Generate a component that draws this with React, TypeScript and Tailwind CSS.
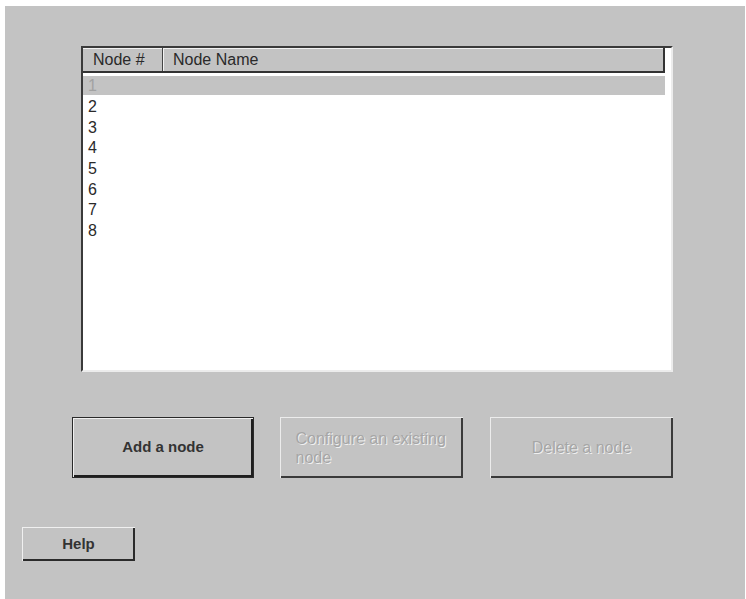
import React from "react";

const rows = [1, 2, 3, 4, 5, 6, 7, 8];

export default function App() {
    const font = "font-['Liberation_Sans',Arial,sans-serif]";

    return (
        <div className={`w-[746px] h-[599px] bg-white pt-[6px] pl-[5px] pr-[1px] ${font}`}>
            <div className="h-[593px] bg-[#c3c3c3] flex flex-col">
                {/* list box */}
                <div className="mt-[40px] ml-[76px] w-[592px] h-[326px] bg-white border-l-2 border-t-2 border-l-[#3a3a3a] border-t-[#3a3a3a] border-r-2 border-b-2 border-r-[#ececec] border-b-[#ececec]">
                    <div className="w-[582px] h-[25px] flex bg-[#c3c3c3] border-b-2 border-r-2 border-[#333] shadow-[inset_0_1px_0_#f2f2f2] text-[16px] text-[#2a2a2a]">
                        <div className="w-[80px] h-full flex items-center pl-[10px] border-r border-[#444] shadow-[1px_0_0_#f2f2f2]">
                            Node #
                        </div>
                        <div className="flex-1 h-full flex items-center pl-[10px]">Node Name</div>
                    </div>
                    <div className="flex flex-col mt-[3px]">
                        {rows.map((n) => (
                            <div
                                key={n}
                                className={
                                    n === 1
                                        ? "w-[582px] h-[19px] mb-[1.7px] flex items-center pl-[5px] text-[16px] bg-[#c3c3c3] text-[#a2a2a2]"
                                        : "w-[582px] h-[20.7px] flex items-center pl-[5px] text-[16px] text-[#2a2a2a]"
                                }
                            >
                                {n}
                            </div>
                        ))}
                    </div>
                </div>

                {/* action buttons */}
                <div className="mt-[45px] ml-[67px] flex">
                    <button className="w-[182px] h-[61px] flex items-center justify-center border border-[#2a2a2a] shadow-[inset_1px_1px_0_#f0f0f0,inset_-2px_-2px_0_#1e1e1e] text-[15px] font-bold text-[#333]">
                        Add a node
                    </button>
                    <button
                        disabled
                        className="ml-[26px] w-[183px] h-[61px] flex items-center justify-center shadow-[inset_1px_1px_0_#ececec,inset_-2px_-2px_0_#3a3a3a] text-[16px] text-[#a6a6a6] [text-shadow:1px_1px_0_#f0f0f0]"
                    >
                        <span className="w-[152px] text-left leading-[19px]">Configure an existing node</span>
                    </button>
                    <button
                        disabled
                        className="ml-[27px] w-[183px] h-[61px] flex items-center justify-center shadow-[inset_1px_1px_0_#ececec,inset_-2px_-2px_0_#3a3a3a] text-[16px] text-[#a6a6a6] [text-shadow:1px_1px_0_#f0f0f0]"
                    >
                        Delete a node
                    </button>
                </div>

                {/* help */}
                <div className="mt-[49px] ml-[17px]">
                    <button className="w-[113px] h-[34px] flex items-center justify-center shadow-[inset_1px_1px_0_#f0f0f0,inset_-2px_-2px_0_#2a2a2a] text-[15px] font-bold text-[#333]">
                        Help
                    </button>
                </div>
            </div>
        </div>
    );
}
